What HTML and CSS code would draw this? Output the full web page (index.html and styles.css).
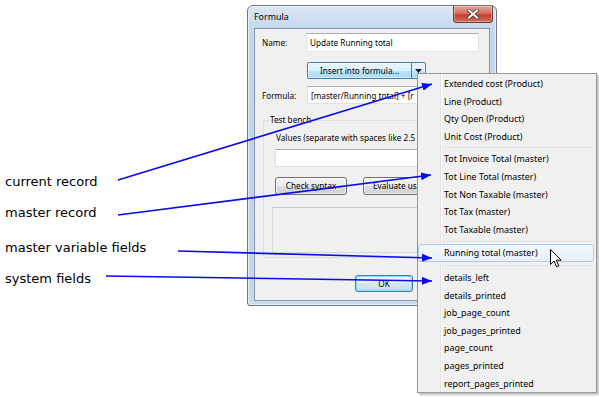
FILE: index.html
```html
<!DOCTYPE html>
<html>
<head>
<meta charset="utf-8">
<link rel="stylesheet" href="styles.css">
</head>
<body>
<div class="stage">
  <div class="notes">
    <div class="note n1">current record</div>
    <div class="note n2">master record</div>
    <div class="note n3">master variable fields</div>
    <div class="note n4">system fields</div>
  </div>

  <div class="window">
    <div class="titlebar">
      <span class="title">Formula</span>
      <span class="close">
        <svg width="12" height="10" viewBox="0 0 12 10">
          <path d="M2 1.5 L10 8.5 M10 1.5 L2 8.5" stroke="#3b3b3b" stroke-width="3.6" stroke-linecap="square"/>
          <path d="M2 1.5 L10 8.5 M10 1.5 L2 8.5" stroke="#ffffff" stroke-width="2" stroke-linecap="square"/>
        </svg>
      </span>
    </div>
    <div class="client">
      <div class="row name-row">
        <span class="lbl">Name:</span>
        <div class="textbox">Update Running total</div>
      </div>
      <div class="row btn-row">
        <div class="split">
          <span class="split-main">Insert into formula...</span>
          <span class="split-arrow"><svg width="7" height="4" viewBox="0 0 7 4"><path d="M0 0 L7 0 L3.5 4 Z" fill="#222"/></svg></span>
        </div>
      </div>
      <div class="row formula-row">
        <span class="lbl">Formula:</span>
        <div class="textbox"><span class="clip formula-clip">[master/Running total] + [r</span></div>
      </div>
      <div class="group">
        <span class="legend">Test bench</span>
        <div class="values-lbl">Values (separate with spaces like 2.5</div>
        <div class="textbox values-box"></div>
        <div class="btns">
          <div class="btn check">Check syntax</div>
          <div class="btn eval"><span class="clip eval-clip">Evaluate us</span></div>
        </div>
        <div class="result"></div>
      </div>
      <div class="ok-row"><div class="btn ok">OK</div></div>
    </div>
  </div>

  <div class="menu">
    <div class="item">Extended cost (Product)</div>
    <div class="item">Line (Product)</div>
    <div class="item">Qty Open (Product)</div>
    <div class="item">Unit Cost (Product)</div>
    <div class="sep s1"></div>
    <div class="item">Tot Invoice Total (master)</div>
    <div class="item">Tot Line Total (master)</div>
    <div class="item">Tot Non Taxable (master)</div>
    <div class="item">Tot Tax (master)</div>
    <div class="item">Tot Taxable (master)</div>
    <div class="sep s2"></div>
    <div class="item hot">Running total (master)</div>
    <div class="sep s3"></div>
    <div class="item">details_left</div>
    <div class="item">details_printed</div>
    <div class="item">job_page_count</div>
    <div class="item">job_pages_printed</div>
    <div class="item">page_count</div>
    <div class="item">pages_printed</div>
    <div class="item">report_pages_printed</div>
  </div>

  <svg class="arrows" width="599" height="397" viewBox="0 0 599 397">
    <defs>
      <marker id="head" markerUnits="userSpaceOnUse" markerWidth="10" markerHeight="8" refX="10" refY="4" orient="auto">
        <path d="M0 0 L10 4 L0 8 Z" fill="#0a0af0"/>
      </marker>
    </defs>
    <g stroke="#0a0af0" stroke-width="1.6" fill="none">
      <line x1="118" y1="180" x2="432" y2="84" marker-end="url(#head)"/>
      <line x1="118" y1="215" x2="431" y2="175" marker-end="url(#head)"/>
      <line x1="178" y1="251" x2="432" y2="258" marker-end="url(#head)"/>
      <line x1="106" y1="276" x2="432" y2="281" marker-end="url(#head)"/>
    </g>
  </svg>

  <svg class="cursor" width="13" height="19" viewBox="0 0 13 19">
    <path d="M0.5 0.5 L0.5 15.5 L4 12 L6.6 17.8 L8.8 16.8 L6.3 11.2 L11.2 11.2 Z" fill="#fff" stroke="#000" stroke-width="1" stroke-linejoin="miter"/>
  </svg>
</div>
</body>
</html>
```

FILE: styles.css
```css
html, body {
  margin: 0;
  padding: 0;
  background: #ffffff;
}

.stage {
  position: relative;
  width: 599px;
  height: 397px;
  display: flex;
  align-items: flex-start;
  overflow: hidden;
  font-family: "Noto Sans", "Open Sans", sans-serif;
  font-size: 8.2px;
  color: #000;
}

/* annotation labels */
.notes {
  width: 247px;
  flex: none;
  display: flex;
  flex-direction: column;
  padding-top: 174px;
  box-sizing: border-box;
  font-family: "DejaVu Sans", Verdana, sans-serif;
  font-size: 13px;
  line-height: 16px;
  color: #000;
}
.note { padding-left: 5px; white-space: nowrap; }
.n2 { margin-top: 15px; }
.n3 { margin-top: 19px; }
.n4 { margin-top: 15px; }

/* window */
.window {
  flex: none;
  margin-top: 5px;
  width: 250px;
  height: 301px;
  box-sizing: border-box;
  border: 1px solid #6b7786;
  border-radius: 6px 6px 3px 3px;
  background: linear-gradient(#dce7f4, #c6d8ee 22px, #c0d3ea 60%, #c9daee);
  box-shadow: inset 0 0 0 1px rgba(255,255,255,0.55);
  display: flex;
  flex-direction: column;
}

.titlebar {
  height: 22px;
  flex: none;
  display: flex;
  justify-content: space-between;
  align-items: flex-start;
  padding-left: 6px;
  padding-right: 3px;
}
.title {
  font-size: 8.9px;
  line-height: 22px;
  color: #000;
}
.close {
  width: 40px;
  height: 17px;
  box-sizing: border-box;
  border: 1px solid #6d3a3a;
  border-top: none;
  border-radius: 0 0 4px 4px;
  background: linear-gradient(#e8a493, #d6705e 45%, #c4402c 55%, #d26a52);
  display: flex;
  align-items: center;
  justify-content: center;
  box-shadow: inset 0 0 0 1px rgba(255,255,255,0.35);
}
.close svg { display: block; }

.client {
  flex: none;
  margin: 0 6px;
  height: 273px;
  box-sizing: border-box;
  border: 1px solid #8797ad;
  background: #f0f0f0;
  display: flex;
  flex-direction: column;
  padding-left: 7px;
  overflow: hidden;
}

.row { display: flex; align-items: center; flex: none; }
.lbl { width: 44px; flex: none; white-space: nowrap; }

.textbox {
  box-sizing: border-box;
  background: #fff;
  border: 1px solid #dfe3e9;
  border-top-color: #abadb3;
  padding-left: 3px;
  white-space: nowrap;
  overflow: hidden;
  display: flex;
  align-items: center;
}

.clip {
  display: inline-block;
  overflow: hidden;
  white-space: nowrap;
  vertical-align: top;
}
.formula-clip { max-width: 106px; }
.eval-clip { max-width: 46px; }

.name-row { margin-top: 4px; height: 19px; }
.name-row .textbox { width: 173px; height: 19px; }

.btn-row { margin-top: 10px; height: 17px; padding-left: 45px; }
.split {
  display: flex;
  width: 119px;
  height: 17px;
  box-sizing: border-box;
  border: 1px solid #3c7fb1;
  border-radius: 2px;
  background: linear-gradient(#eaf6fd, #d9f0fc 50%, #bee6fd 50%, #a7d9f5);
  box-shadow: inset 0 0 0 1px rgba(255,255,255,0.6);
}
.split-main {
  flex: 1;
  text-align: center;
  line-height: 15px;
  white-space: nowrap;
}
.split-arrow {
  width: 13px;
  border-left: 1px solid #3c7fb1;
  display: flex;
  align-items: center;
  justify-content: center;
}
.split-arrow svg { display: block; }

.formula-row { margin-top: 7px; height: 18px; }
.formula-row .lbl { width: 45px; }
.formula-row .textbox { width: 180px; height: 18px; }

.group {
  position: relative;
  flex: none;
  margin-top: 16px;
  margin-left: 1px;
  width: 217px;
  height: 138px;
  box-sizing: border-box;
  border: 1px solid #d5dfe5;
  border-radius: 3px;
  padding: 11px 0 0 12px;
  display: flex;
  flex-direction: column;
}
.legend {
  position: absolute;
  left: 5px;
  top: -7px;
  padding: 0 1px;
  line-height: 12px;
  background: #f0f0f0;
  white-space: nowrap;
}
.values-lbl {
  max-width: 141px;
  overflow: hidden;
  line-height: 12px;
  white-space: nowrap;
}
.values-box {
  margin-top: 5px;
  margin-left: -1px;
  width: 210px;
  height: 18px;
  flex: none;
}
.btns { display: flex; margin-top: 10px; margin-left: -1px; gap: 16px; flex: none; }

.btn {
  box-sizing: border-box;
  height: 18px;
  border: 1px solid #707070;
  border-radius: 3px;
  background: linear-gradient(#f2f2f2, #ebebeb 50%, #dddddd 50%, #cfcfcf);
  box-shadow: inset 0 0 0 1px rgba(255,255,255,0.7);
  text-align: center;
  line-height: 16px;
  white-space: nowrap;
}
.check { width: 72px; }
.eval { width: 104px; text-align: left; padding-left: 9px; }

.result {
  margin-top: 12px;
  margin-left: -4px;
  width: 206px;
  height: 46px;
  flex: none;
  box-sizing: border-box;
  border: 1px solid #d3d8dd;
  border-top-color: #c8ccd2;
  background: #f0f0f0;
}

.ok-row { display: flex; margin-top: 17px; padding-left: 93px; flex: none; }
.ok {
  width: 58px;
  height: 17px;
  line-height: 15px;
  border-color: #3c7fb1;
  box-shadow: inset 0 0 0 1px #7ee0fb;
  background: linear-gradient(#eef7fc, #e2eff8 50%, #d4e6f3 50%, #c6def0);
}

/* popup menu */
.menu {
  position: absolute;
  left: 417px;
  top: 73px;
  width: 180px;
  height: 320px;
  box-sizing: border-box;
  border: 1px solid #979797;
  padding: 1px 2px 0 0;
  font-size: 8.9px;
  background:
    linear-gradient(to right, transparent 22px, #e2e3e3 22px, #e2e3e3 23px, #ffffff 23px, #ffffff 24px, transparent 24px),
    #f0f0f0;
  box-shadow: 2px 2px 2px rgba(0,0,0,0.25);
  display: flex;
  flex-direction: column;
}
.item {
  height: 17.6px;
  line-height: 17px;
  padding-left: 26px;
  box-sizing: border-box;
  white-space: nowrap;
  flex: none;
}
.item.hot {
  border: 1px solid #aecbee;
  border-radius: 3px;
  padding-left: 25px;
  line-height: 15px;
  background: linear-gradient(#f3f8fd, #e6effa);
}
.sep {
  flex: none;
  margin-left: 24px;
  background: linear-gradient(#e2e3e3, #e2e3e3) no-repeat 0 50% / 100% 1px;
}
.s1 { height: 5px; }
.s2 { height: 6px; }
.s3 { height: 7px; }

.arrows {
  position: absolute;
  left: 0;
  top: 0;
  pointer-events: none;
}
.cursor {
  position: absolute;
  left: 550px;
  top: 249px;
  pointer-events: none;
}
```
